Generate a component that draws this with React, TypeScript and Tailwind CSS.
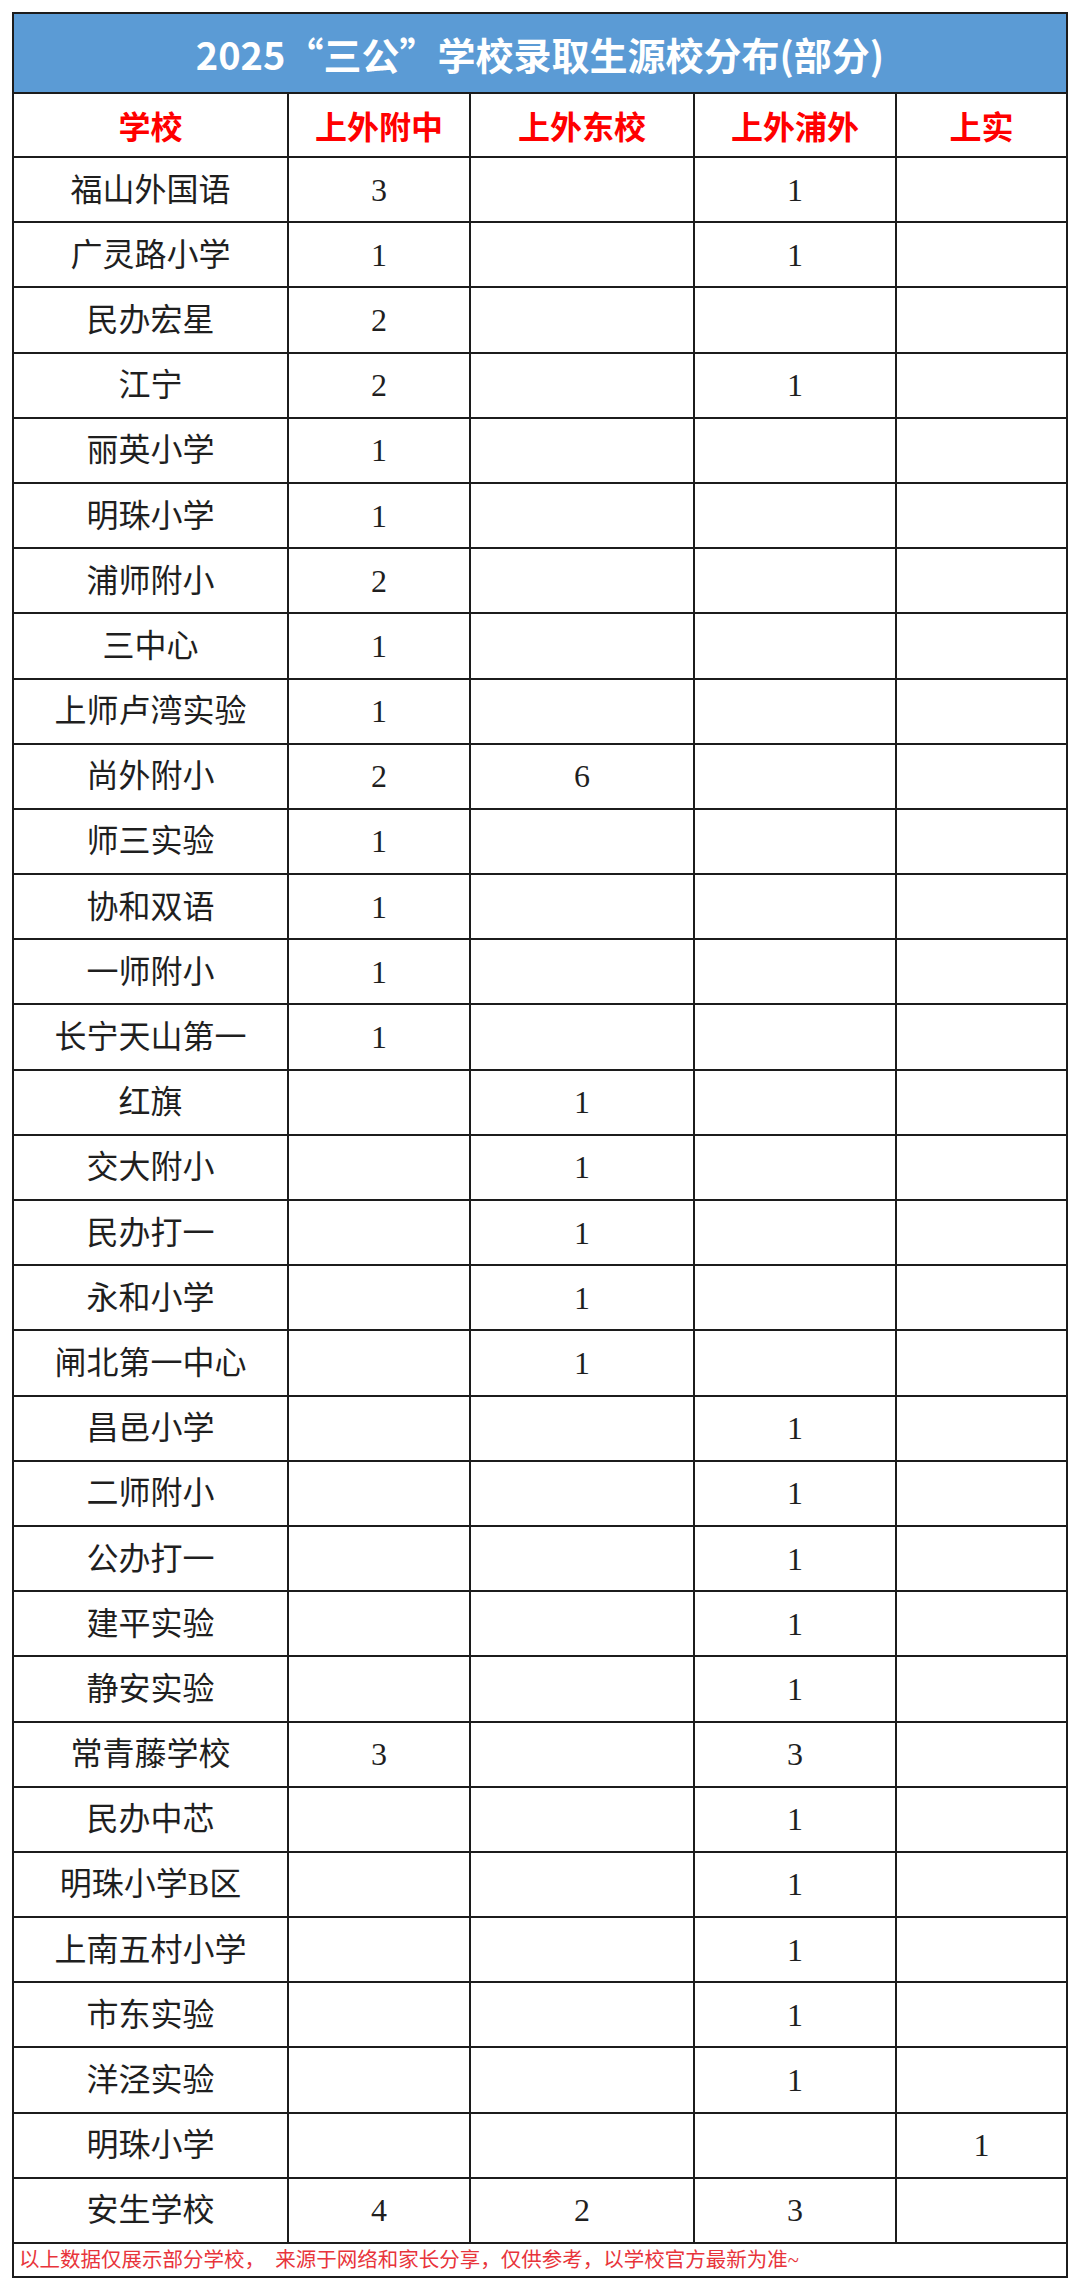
import React from "react";

type Row = [string, string, string, string, string];

const rows: Row[] = [
  ["福山外国语", "3", "", "1", ""],
  ["广灵路小学", "1", "", "1", ""],
  ["民办宏星", "2", "", "", ""],
  ["江宁", "2", "", "1", ""],
  ["丽英小学", "1", "", "", ""],
  ["明珠小学", "1", "", "", ""],
  ["浦师附小", "2", "", "", ""],
  ["三中心", "1", "", "", ""],
  ["上师卢湾实验", "1", "", "", ""],
  ["尚外附小", "2", "6", "", ""],
  ["师三实验", "1", "", "", ""],
  ["协和双语", "1", "", "", ""],
  ["一师附小", "1", "", "", ""],
  ["长宁天山第一", "1", "", "", ""],
  ["红旗", "", "1", "", ""],
  ["交大附小", "", "1", "", ""],
  ["民办打一", "", "1", "", ""],
  ["永和小学", "", "1", "", ""],
  ["闸北第一中心", "", "1", "", ""],
  ["昌邑小学", "", "", "1", ""],
  ["二师附小", "", "", "1", ""],
  ["公办打一", "", "", "1", ""],
  ["建平实验", "", "", "1", ""],
  ["静安实验", "", "", "1", ""],
  ["常青藤学校", "3", "", "3", ""],
  ["民办中芯", "", "", "1", ""],
  ["明珠小学B区", "", "", "1", ""],
  ["上南五村小学", "", "", "1", ""],
  ["市东实验", "", "", "1", ""],
  ["洋泾实验", "", "", "1", ""],
  ["明珠小学", "", "", "", "1"],
  ["安生学校", "4", "2", "3", ""],
];

const headers = ["学校", "上外附中", "上外东校", "上外浦外", "上实"];

export default function App() {
  return (
    <div className="w-[1080px] min-h-[2283px] bg-white pt-[12px] pl-[12px]">
      <div className="w-[1056px] border-2 border-[#1c1c1c] bg-white">
        <div
          className="h-[80px] bg-[#5b9bd5] border-b-2 border-[#1c1c1c] flex items-center justify-center text-white font-bold text-[38px] leading-none pt-[2px]"
          style={{ fontFamily: "'Noto Sans CJK SC', 'Noto Sans', sans-serif" }}
        >
          2025“三公”学校录取生源校分布(部分)
        </div>
        <div
          className="grid grid-cols-[275px_182px_224px_202px_1fr] h-[64px] border-b-2 border-[#1c1c1c]"
          style={{ fontFamily: "'Noto Sans CJK SC', sans-serif" }}
        >
          {headers.map((h, i) => (
            <div
              key={i}
              className={`flex items-center justify-center text-[#ff0000] font-bold text-[32px] leading-none ${
                i < 4 ? "border-r-2 border-[#1c1c1c]" : ""
              }`}
            >
              {h}
            </div>
          ))}
        </div>
        {rows.map((r, ri) => (
          <div
            key={ri}
            className="grid grid-cols-[275px_182px_224px_202px_1fr] h-[65.2px] border-b-2 border-[#1c1c1c]"
            style={{ fontFamily: "'Liberation Serif', 'Noto Sans CJK SC', serif" }}
          >
            {r.map((c, ci) => (
              <div
                key={ci}
                className={`flex items-center justify-center text-[#1f1f1f] text-[32px] leading-none ${
                  ci < 4 ? "border-r-2 border-[#1c1c1c]" : ""
                }`}
              >
                {c}
              </div>
            ))}
          </div>
        ))}
        <div
          className="h-[32px] flex items-center pl-[5px] text-[#e8343b] text-[20.5px] leading-none whitespace-nowrap"
          style={{ fontFamily: "'Liberation Serif', 'Noto Sans CJK SC', serif" }}
        >
          以上数据仅展示部分学校，　来源于网络和家长分享，仅供参考，以学校官方最新为准~
        </div>
      </div>
    </div>
  );
}
